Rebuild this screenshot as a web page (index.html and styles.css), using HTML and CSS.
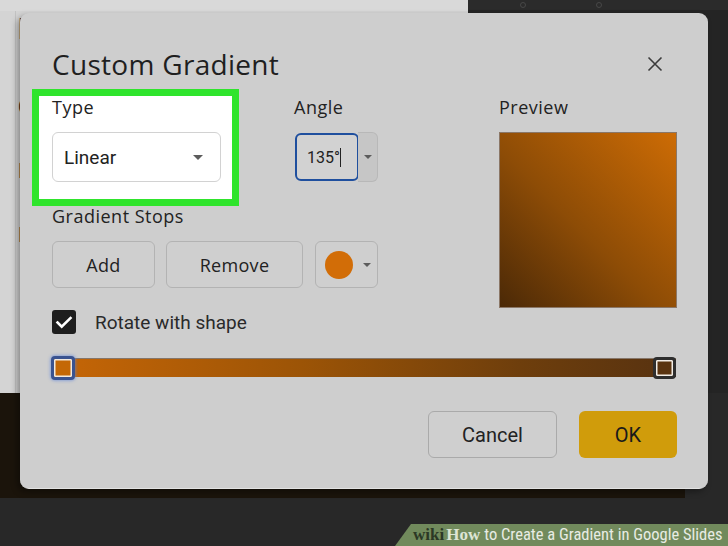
FILE: index.html
```html
<!DOCTYPE html>
<html lang="en">
<head>
<meta charset="utf-8">
<title>Custom Gradient</title>
<link rel="stylesheet" href="styles.css">
</head>
<body>
<div class="screen">
  <div class="workspace">
    <div class="top">
      <aside class="panel">
        <div class="panel-list">
          <span class="frag big">D</span>
          <span class="frag">C</span>
          <span class="frag">L</span>
          <span class="frag">F</span>
        </div>
      </aside>
      <div class="toolbar">
        <span class="tb-dot"></span>
        <span class="tb-dot"></span>
      </div>
    </div>
    <div class="slide-strip"></div>
  </div>

  <div class="dialog">
    <div class="header">
      <h1 class="title">Custom Gradient</h1>
      <svg class="close" viewBox="0 0 16 16" width="16" height="16"><path d="M1.5 1.5L14.5 14.5M14.5 1.5L1.5 14.5" stroke="#3c3c3c" stroke-width="1.6" fill="none"/></svg>
    </div>

    <div class="main">
      <div class="left-col">
        <div class="row1">
          <div class="type-group">
            <div class="label">Type</div>
            <div class="select"><span>Linear</span><span class="tri"></span></div>
          </div>
          <div class="angle-group">
            <div class="label">Angle</div>
            <div class="angle-ctl">
              <div class="angle-input"><span class="angle-val">135°</span><span class="caret"></span></div>
              <div class="angle-drop"><span class="tri small"></span></div>
            </div>
          </div>
        </div>
        <div class="label stops-label">Gradient Stops</div>
        <div class="stops-row">
          <div class="btn add">Add</div>
          <div class="btn remove">Remove</div>
          <div class="btn color"><span class="swatch"></span><span class="tri small"></span></div>
        </div>
      </div>
      <div class="preview-col">
        <div class="label">Preview</div>
        <div class="preview-box"></div>
      </div>
    </div>

    <div class="check-row">
      <span class="checkbox"><svg viewBox="0 0 24 24" width="24" height="24"><path d="M5.5 12.5l4.2 4.2L18.5 8" stroke="#fff" stroke-width="2.6" fill="none" stroke-linecap="square"/></svg></span>
      <span class="check-text">Rotate with shape</span>
    </div>

    <div class="slider">
      <div class="track"></div>
      <span class="handle handle-start"></span>
      <span class="handle handle-end"></span>
    </div>

    <div class="footer">
      <div class="btn cancel">Cancel</div>
      <div class="btn ok">OK</div>
    </div>
  </div>

  <div class="banner">
    <span class="wiki">wiki</span><span class="how">How</span><span class="btext">to Create a Gradient in Google Slides</span>
  </div>
</div>
</body>
</html>
```

FILE: styles.css
```css
* { box-sizing: border-box; }

html, body {
  margin: 0;
  padding: 0;
  background: #282828;
}

.screen {
  position: relative;
  width: 728px;
  height: 546px;
  overflow: hidden;
  background: #282828;
  font-family: "Open Sans", sans-serif;
  color: #222;
}

/* background application */
.workspace {
  display: flex;
  flex-direction: column;
}

.top {
  display: flex;
  height: 393px;
}

.panel {
  width: 468px;
  background: #d4d4d4;
  border-top: 11px solid #d9d9d9;
}

.panel-list {
  margin-left: 15px;
  padding: 0 0 0 2px;
  border-left: 1px solid #c2c2c2;
  height: 100%;
  display: flex;
  flex-direction: column;
  align-items: flex-start;
  gap: 40px;
  font-family: Roboto, sans-serif;
  font-size: 20px;
  line-height: 24px;
  color: #222;
}

.frag.big {
  font-size: 30px;
  line-height: 36px;
  font-weight: 700;
  margin-bottom: 8px;
}

.toolbar {
  flex: 1;
  background: #242424;
  border-top: 10px solid #2b2b2b;
  display: flex;
  gap: 70px;
  padding-left: 52px;
}

.tb-dot {
  width: 6px;
  height: 6px;
  margin-top: -8px;
  border: 1px solid #474747;
  border-radius: 50%;
}

.slide-strip {
  width: 685px;
  height: 105px;
  background: #1b140b;
}

/* dialog window */
.dialog {
  position: absolute;
  left: 20px;
  top: 13px;
  width: 688px;
  height: 476px;
  padding: 35px 31px 0 32px;
  background: #cecece;
  border-radius: 9px;
  border-bottom: 1px solid #e2e2e2;
  box-shadow: -3px 3px 6px rgba(0, 0, 0, 0.35);
  display: flex;
  flex-direction: column;
}

.header {
  display: flex;
  justify-content: space-between;
  align-items: center;
  height: 32px;
}

.title {
  margin: 0;
  font-family: "Open Sans", sans-serif;
  font-weight: 400;
  font-size: 28px;
  line-height: 32px;
  letter-spacing: 0.3px;
  color: #1f1f1f;
}

.close {
  margin-right: 14px;
}

.main {
  display: flex;
  margin-top: 9px;
  align-items: flex-start;
}

.left-col {
  display: flex;
  flex-direction: column;
}

.row1 {
  display: flex;
  align-items: flex-start;
}

.label {
  font-family: "Open Sans", sans-serif;
  font-size: 18px;
  line-height: 22px;
  letter-spacing: 0.5px;
  color: #222;
}

.type-group {
  margin-left: -20px;
  width: 207px;
  border: 7px solid #2fe42c;
  background: #fff;
  padding: 0 11px 17px 13px;
}

.select {
  margin-top: 14px;
  height: 50px;
  border: 1px solid #d2d2d2;
  border-radius: 6px;
  background: #fff;
  display: flex;
  align-items: center;
  justify-content: space-between;
  padding: 0 17px 0 11px;
  font-family: Roboto, sans-serif;
  font-size: 19px;
  color: #222;
}

.tri {
  width: 0;
  height: 0;
  border-left: 5px solid transparent;
  border-right: 5px solid transparent;
  border-top: 5px solid #5c5c5c;
}

.tri.small {
  border-left-width: 4px;
  border-right-width: 4px;
  border-top: 4px solid #5c5c5c;
}

.angle-group {
  margin-left: 55px;
  padding-top: 7px;
}

.angle-ctl {
  display: flex;
  align-items: center;
  margin-top: 14px;
  margin-left: 1px;
  height: 50px;
}

.angle-input {
  width: 64px;
  height: 48px;
  border: 2px solid #1f4f9e;
  border-radius: 6px;
  background: #d2d2d2;
  padding-left: 10px;
  display: flex;
  align-items: center;
  font-family: Roboto, sans-serif;
  font-size: 16px;
  color: #222;
}

.caret {
  width: 1px;
  height: 19px;
  background: #222;
}

.angle-drop {
  width: 20px;
  height: 50px;
  margin-left: -1px;
  background: #c6c6c6;
  border: 1px solid #b8b8b8;
  border-left: none;
  border-radius: 0 6px 6px 0;
  display: flex;
  align-items: center;
  justify-content: center;
}

.stops-label {
  margin-top: -1px;
}

.stops-row {
  display: flex;
  margin-top: 14px;
}

.btn {
  height: 47px;
  border: 1px solid #b3b3b3;
  border-radius: 6px;
  background: #cfcfcf;
  display: flex;
  align-items: center;
  justify-content: center;
  font-family: "Open Sans", sans-serif;
  font-size: 18px;
  letter-spacing: 0.3px;
  color: #222;
}

.add { width: 103px; }
.remove { width: 137px; margin-left: 11px; }

.color {
  width: 63px;
  margin-left: 12px;
  justify-content: flex-start;
  padding-left: 9px;
  gap: 10px;
}

.swatch {
  width: 28px;
  height: 28px;
  border-radius: 50%;
  background: #d26d07;
}

.preview-col {
  margin-left: auto;
  width: 178px;
  padding-top: 7px;
}

.preview-box {
  margin-top: 14px;
  height: 176px;
  border: 1px solid #8b7767;
  background: linear-gradient(to top right, #4b2907 0%, #8d4c06 45%, #cd6c05 100%);
}

.check-row {
  display: flex;
  align-items: center;
  margin-top: 2px;
  height: 24px;
}

.checkbox {
  width: 24px;
  height: 24px;
  border-radius: 3px;
  background: #1e1e1e;
  display: flex;
}

.check-text {
  margin-left: 19px;
  font-family: Roboto, sans-serif;
  font-size: 19px;
  color: #2a2a2a;
}

.slider {
  position: relative;
  margin-top: 21px;
  height: 26px;
  padding: 3px 1px 0 0;
}

.track {
  height: 19px;
  background: linear-gradient(to right, #c66606 0%, #9c5406 40%, #6e3e0c 75%, #573210 100%);
  border-top: 1px solid #85766a;
}

.handle {
  position: absolute;
  top: 1px;
  width: 24px;
  height: 24px;
  border-radius: 4px;
  border: 3px solid #3a5390;
  box-shadow: inset 0 0 0 1.5px #f2e9dd, 0 0 3px 1px rgba(90, 130, 220, 0.55);
  background: #c46806;
}

.handle-start { left: -1px; }

.handle-end {
  right: 1px;
  top: 2px;
  width: 23px;
  height: 22px;
  border-color: #2e2e2e;
  background: #5a3410;
  box-shadow: inset 0 0 0 1.5px #f2ede6;
}

.footer {
  display: flex;
  justify-content: flex-end;
  gap: 22px;
  margin-top: 30px;
}

.cancel {
  width: 129px;
  font-family: Roboto, sans-serif;
  font-size: 20px;
  letter-spacing: 0;
  border-color: #aaaaaa;
}

.ok {
  width: 98px;
  border: none;
  background: #d09c0b;
  font-family: Roboto, sans-serif;
  font-size: 20px;
  letter-spacing: 0;
  color: #1a1a1a;
}

/* watermark banner */
.banner {
  position: absolute;
  right: 0;
  bottom: 0;
  width: 333px;
  height: 22px;
  background: #718a5c;
  clip-path: polygon(16px 0, 100% 0, 100% 100%, 0 100%);
  display: flex;
  align-items: baseline;
  padding-left: 18px;
  line-height: 22px;
  white-space: nowrap;
}

.wiki {
  font-family: "Liberation Serif", serif;
  font-weight: 700;
  font-size: 17px;
  color: #2b3825;
}

.how {
  margin-left: 2px;
  font-family: "Liberation Serif", serif;
  font-weight: 700;
  font-size: 17px;
  color: #dde5d5;
}

.btext {
  margin-left: 4px;
  font-family: "Liberation Sans Narrow", "Roboto Condensed", Roboto, sans-serif;
  font-size: 16.5px;
  color: #e8ece4;
}
```
